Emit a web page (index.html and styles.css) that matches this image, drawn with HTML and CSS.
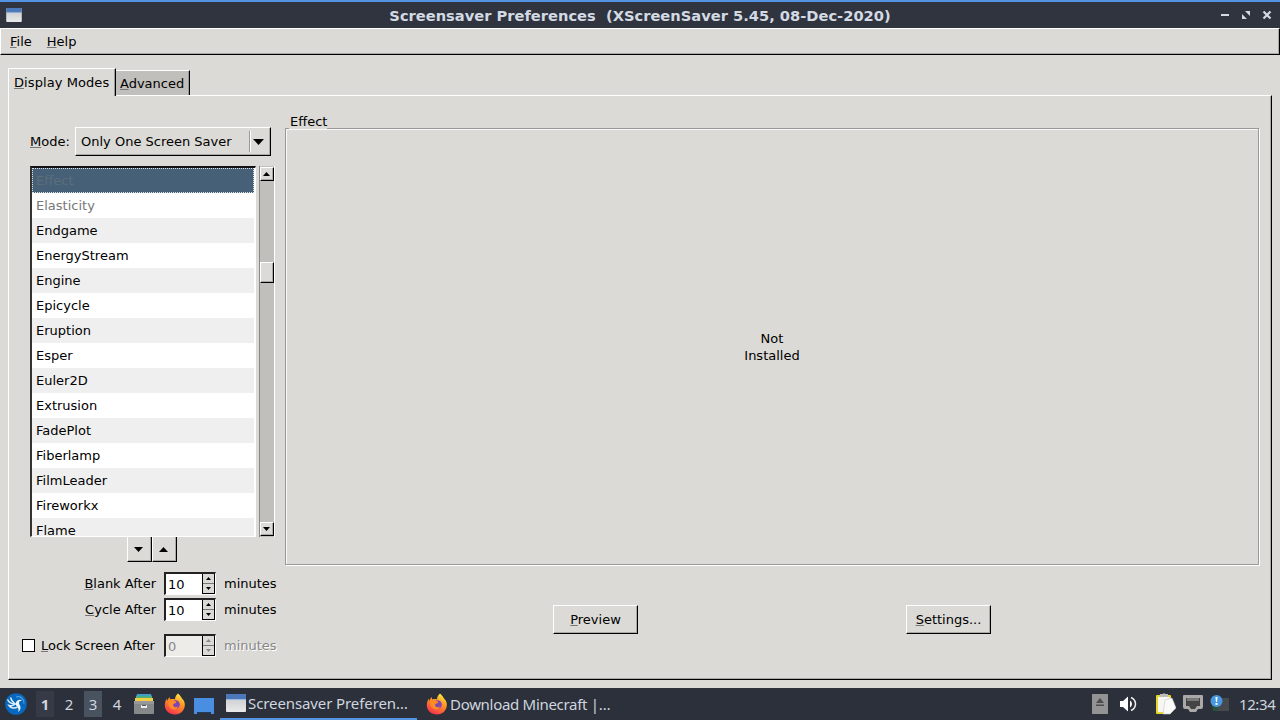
FILE: index.html
```html
<!DOCTYPE html>
<html lang="en">
<head>
<meta charset="utf-8">
<title>Screensaver Preferences</title>
<link rel="stylesheet" href="styles.css">
</head>
<body>
<svg width="0" height="0" class="defs" aria-hidden="true">
  <defs>
    <linearGradient id="winBody" x1="0" y1="0" x2="0" y2="1"><stop offset="0" stop-color="#c3c6cb"/><stop offset="1" stop-color="#e9e9e9"/></linearGradient>
    <linearGradient id="fox" x1=".8" y1="0" x2=".3" y2="1"><stop offset="0" stop-color="#fff04a"/><stop offset=".4" stop-color="#ff9a22"/><stop offset="1" stop-color="#f5304e"/></linearGradient>
    <symbol id="window" viewBox="0 0 20 18"><rect width="20" height="18" rx="1" fill="url(#winBody)"/><path d="M0 6V1q0-1 1-1h18q1 0 1 1v5z" fill="#4b78b8"/><path d="M0 5h20v1H0z" fill="#9db8df"/></symbol>
    <symbol id="firefox" viewBox="0 0 22 22">
      <path d="M14 .5c2 1.500 3 3.500 4 5 2.500 2 3.200 5 2.700 8-1 5-5 8-9.700 8C5 21.500.8 17.500.8 12c0-3 1-5 2.200-6.500V8l2.500-4 .8 2.500C8 5.800 9.500 6 11 6.500c0-2.500 1-4.500 3-6z" fill="url(#fox)"/>
      <circle cx="11.500" cy="11.500" r="4.300" fill="#8046b4"/>
      <path d="M4.500 8c2-1.500 4.500-1.500 6.500 0 1 .5 1.500 1 1 1.800L9.500 11c-.8.700-.5 2 .5 2.700 1.500 1 3 .3 4-.2-.8 2.500-3.500 3.500-6 2.500S3.500 11.500 4.500 8z" fill="#ff8a26"/>
    </symbol>
  </defs>
</svg>
<div class="screen">
  <header class="titlebar">
    <svg class="title-icon" width="16" height="14"><use href="#window"/></svg>
    <div class="title">Screensaver Preferences&nbsp; (XScreenSaver 5.45, 08-Dec-2020)</div>
    <svg class="title-controls" width="56" height="14" viewBox="0 0 56 14">
      <path d="M3 6h8v2H3z" fill="#d3dae3"/>
      <path d="M27 3h5v5zM24 6v5h5z" fill="#d3dae3"/>
      <path d="M45.500 3.500l7 7m0-7l-7 7" stroke="#d3dae3" stroke-width="2.200"/>
    </svg>
  </header>
  <nav class="menubar"><span><u>F</u>ile</span><span><u>H</u>elp</span></nav>
  <main class="window">
    <div class="tabs">
      <div class="tab active"><u>D</u>isplay Modes</div>
      <div class="tab"><u>A</u>dvanced</div>
    </div>
    <section class="page">
      <div class="left">
        <div class="mode">
          <label><u>M</u>ode:</label>
          <div class="combo raised"><span>Only One Screen Saver</span><i></i>
            <svg width="11" height="6"><path d="M0 0h11L5.500 6z"/></svg></div>
        </div>
        <div class="listbox">
          <ul class="list">
            <li class="selected">Effect</li><li class="dim">Elasticity</li><li>Endgame</li><li>EnergyStream</li><li>Engine</li><li>Epicycle</li><li>Eruption</li><li>Esper</li><li>Euler2D</li><li>Extrusion</li><li>FadePlot</li><li>Fiberlamp</li><li>FilmLeader</li><li>Fireworkx</li><li>Flame</li>
          </ul>
          <div class="scrollbar">
            <div class="stepper raised"><svg width="7" height="4"><path d="M0 4h7L3.500 0z"/></svg></div>
            <div class="trough"><div class="thumb raised"></div></div>
            <div class="stepper raised"><svg width="7" height="4"><path d="M0 0h7L3.500 4z"/></svg></div>
          </div>
        </div>
        <div class="order">
          <div class="raised"><svg width="9" height="5"><path d="M0 0h9L4.500 5z"/></svg></div>
          <div class="raised"><svg width="9" height="5"><path d="M0 5h9L4.500 0z"/></svg></div>
        </div>
        <div class="spinrow blank">
          <label><u>B</u>lank After</label>
          <div class="spin"><span>10</span><div class="arrows"><b><svg width="5" height="3"><path d="M0 3h5L2.500 0z"/></svg></b><b><svg width="5" height="3"><path d="M0 0h5L2.500 3z"/></svg></b></div></div>
          <span class="unit">minutes</span>
        </div>
        <div class="spinrow cycle">
          <label><u>C</u>ycle After</label>
          <div class="spin"><span>10</span><div class="arrows"><b><svg width="5" height="3"><path d="M0 3h5L2.500 0z"/></svg></b><b><svg width="5" height="3"><path d="M0 0h5L2.500 3z"/></svg></b></div></div>
          <span class="unit">minutes</span>
        </div>
        <div class="spinrow lock">
          <label><i class="check"></i><span><u>L</u>ock Screen After</span></label>
          <div class="spin off"><span>0</span><div class="arrows"><b><svg width="5" height="3"><path d="M0 3h5L2.500 0z"/></svg></b><b><svg width="5" height="3"><path d="M0 0h5L2.500 3z"/></svg></b></div></div>
          <span class="unit off">minutes</span>
        </div>
      </div>
      <div class="right">
        <div class="legend">Effect</div>
        <div class="frame"><p>Not<br>Installed</p></div>
        <div class="actions">
          <div class="button raised"><span><u>P</u>review</span></div>
          <div class="button raised"><span><u>S</u>ettings...</span></div>
        </div>
      </div>
    </section>
  </main>
  <footer class="taskbar">
    <svg class="start" width="22" height="22" viewBox="0 0 22 22"><circle cx="11" cy="11" r="10.800" fill="#0868bd"/><path d="M2.500 6.500c1.500 3 4 4.500 7.500 4.500M5.500 4.500C6 7 7.500 9 10 11c-2 2-4 2-6 1.500 2 3 6 3 8.500 1.500" fill="none" stroke="#d9ecfb" stroke-width="1.500"/><path d="M10 11c1-1 1.200-2.500 2.500-3.500 1.500-1 3.500-.8 4.500.3-2-.2-3 .7-3 2.200 0 2 2 3 1.500 5.500-.3 1.500-1.300 2.500-2.500 3.500.8-2 .7-3.500-.5-5z" fill="#eef7ff"/><path d="M11 4c4.500-1.200 8 1.800 8 6.500" fill="none" stroke="#4aa0e4" stroke-width="1.200"/></svg>
    <div class="desks"><span class="used bold">1</span><span>2</span><span class="current">3</span><span>4</span></div>
    <svg class="files" width="20" height="20" viewBox="0 0 20 20"><path d="M3 0h14l1 3H2z" fill="#3fa0c8"/><path d="M2 2h16v3H2z" fill="#4fae7b"/><path d="M1 4h18v4H1z" fill="#f2cf45"/><rect y="7" width="20" height="13" rx="1" fill="#858989"/><path d="M0 7h20v3H0z" fill="#969999"/><path d="M7 11h6v3H7z" fill="#eee"/><path d="M8 11h4v1H8z" fill="#555"/></svg>
    <svg class="ff" width="22" height="22"><use href="#firefox"/></svg>
    <svg class="desktop" width="20" height="17" viewBox="0 0 20 17"><path d="M0 0h20v16h-3v-2H3v2H0z" fill="#4a8ee2"/><path d="M3 14h14v1H3z" fill="#263a59"/></svg>
    <div class="task active"><svg width="20" height="18"><use href="#window"/></svg><span>Screensaver Preferen…</span></div>
    <div class="task second"><svg width="22" height="22"><use href="#firefox"/></svg><span>Download Minecraft |…</span></div>
    <div class="tray">
      <svg width="16" height="20" viewBox="0 0 16 20"><path d="M0 0h16v20H0z" fill="#939393"/><path d="M4 9h8L8 4zM4 10.500h8V12H4z" fill="#4d4d4d"/></svg>
      <svg class="volume" width="17" height="16" viewBox="0 0 17 16"><path d="M0 5h3l5-4.500v15L3 11H0z" fill="#fff"/><path d="M10 4.500v7q2-1 2-3.500t-2-3.500z" fill="#fff"/><path d="M11 1.500q4.500 2 4.500 6.500T11 14.500" fill="none" stroke="#eee" stroke-width="1.500"/></svg>
      <svg class="clip" width="20" height="22" viewBox="0 0 20 22"><rect x="0" y="2" width="15" height="19" rx="1" fill="#e6d72c"/><path d="M2 4h12v15H2z" fill="#f6f6f2"/><path d="M4 1h2.500q1.500-1.500 3 0H12v3H4z" fill="#bbb"/><path d="M9 7l7-2 4 10-6 6H7z" fill="#fafafa" stroke="#c9c9c5" stroke-width=".6"/></svg>
      <svg class="net" width="20" height="18" viewBox="0 0 20 18"><path d="M1 0h18q1 0 1 1v11q0 2-2 2h-3l-2 3H7l-2-3H2q-2 0-2-2V1q0-1 1-1z" fill="#aaa9a7"/><path d="M3 3h14v8h-3l-2 3H8l-2-3H3z" fill="#444"/><path d="M5 3v3m2-3v3m2-3v3m2-3v3m2-3v3m2-3v3" stroke="#bbb" stroke-width=".9"/></svg>
      <svg class="notify" width="20" height="18" viewBox="0 0 20 18"><path d="M3 3h16v13H3z" fill="#464a4d"/><path d="M2 10h6v6H3z" fill="#29523c"/><circle cx="6.500" cy="6" r="6" fill="#4898df"/><path d="M5.500 2h2l-.4 5h-1.200zM5.500 8h2v2h-2z" fill="#fff"/></svg>
      <time>12:34</time>
    </div>
  </footer>
</div>
</body>
</html>
```
FILE: styles.css
```css
* { box-sizing: border-box; }
body { margin: 0; font: 13px/17px "DejaVu Sans", sans-serif; color: #000; }
.defs { position: absolute; }
svg { display: block; flex: none; }
u { text-decoration: underline; text-decoration-color: #777; text-decoration-skip-ink: none; text-underline-offset: 1px; text-decoration-thickness: 1px; }
.screen { width: 1280px; height: 720px; overflow: hidden; display: flex; flex-direction: column; background: #dbdad6; }
.titlebar { height: 28px; flex: none; display: flex; align-items: center; background: #2f343f; border-top: 2px solid #5294e2; padding: 0 6px 0 6px; color: #d3dae3; }
.title { flex: 1; text-align: center; font-weight: bold; font-size: 14.667px; padding-left: 40px; white-space: nowrap; }
.menubar { height: 27px; flex: none; display: flex; gap: 15px; align-items: center; padding: 0 9px; border: 1px solid #fff; border-right-color: #000; border-bottom-color: #000; box-shadow: inset -1px -1px #aaa9a6; }
.window { flex: 1; padding: 13px 8px 8px; display: flex; flex-direction: column; }
.tabs { display: flex; height: 27px; align-items: flex-end; }
.tab { height: 25px; padding: 4px 4px 0 4px; width: 74px; background: #c0bfbc; border-top: 1px solid #fff; border-right: 1px solid #000; box-shadow: inset -1px 0 #999; white-space: nowrap; }
.tab.active { position: relative; width: 108px; height: 28px; margin-bottom: -1px; padding: 5px 0 0 5px; background: #dbdad6; border-left: 1px solid #fff; letter-spacing: .08px; }
.page { flex: 1; display: flex; border: 1px solid #fff; border-right-color: #000; border-bottom-color: #000; box-shadow: inset -1px -1px #aaa9a6; }
.left { width: 276px; flex: none; padding-top: 31px; }
.raised { background: #dbdad6; border: 1px solid #fff; border-right-color: #000; border-bottom-color: #000; box-shadow: inset -1px -1px #aaa9a6; display: flex; align-items: center; justify-content: center; }
.mode { display: flex; align-items: center; padding-left: 21px; height: 29px; }
.mode label { width: 45px; }
.combo { width: 196px; height: 29px; justify-content: flex-start; padding-left: 5px; white-space: nowrap; }
.combo span { width: 168px; }
.combo i { width: 2px; height: 21px; border-left: 1px solid #999; border-right: 1px solid #fff; margin-right: 2px; }
.listbox { display: flex; margin: 10px 0 0 21px; height: 371px; gap: 3px; }
.list { list-style: none; margin: 0; padding: 0; width: 226px; overflow: hidden; background: #fff; border: 1px solid #000; border-top: 2px solid #111; border-left: 2px solid #333; border-right: 1px solid #fff; border-bottom-color: #fff; }
.list li { height: 25px; padding: 4px 0 0 4px; margin-right: 1px; white-space: nowrap; }
.list li:nth-child(odd) { background: #efefef; }
.list li.selected { background: #466078; color: #5d6d78; outline: 1px dotted #dfe4e8; outline-offset: -1px; }
.list li.dim { color: #777; }
.scrollbar { width: 16px; display: flex; flex-direction: column; border-left: 1px solid #888; border-right: 1px solid #fff; background: #c0bfbc; padding: 1px 0; }
.stepper { height: 14px; flex: none; padding-right: 1px; }
.trough { flex: 1; padding-top: 81px; }
.thumb { height: 21px; }
.order { display: flex; padding-left: 118px; height: 25px; }
.order div { width: 25px; border-top: 0; padding-right: 2px; }
.spinrow { display: flex; align-items: center; height: 23px; }
.spinrow label { width: 147px; margin-right: 8px; text-align: right; }
.blank { margin-top: 10px; }
.cycle { margin-top: 3px; }
.lock { margin-top: 13px; }
.lock label { display: flex; align-items: center; padding-left: 13px; white-space: nowrap; }
.check { width: 13px; height: 13px; background: #fff; border: 1px solid #000; margin-right: 6px; }
.spin { width: 52px; height: 23px; display: flex; background: #fff; border: 1px solid #fff; border-top: 2px solid #222; border-left: 2px solid #222; }
.spin > span { width: 36px; padding: 2px 0 0 2px; }
.arrows { width: 13px; display: flex; flex-direction: column; border-left: 1px solid #000; border-right: 1px solid #000; border-bottom: 1px solid #000; background: #dbdad6; }
.arrows b { flex: 1; display: flex; align-items: center; justify-content: center; }
.arrows b + b { border-top: 1px solid #777; }
.unit { margin-left: 8px; }
.spin.off { background: #edece9; color: #888; }
.spin.off path { fill: #888; }
.unit.off { color: #888; text-shadow: 1px 1px #fff; }
.right { width: 974px; padding-top: 16px; display: flex; flex-direction: column; }
.legend { align-self: flex-start; position: relative; margin-left: 4px; padding-left: 1px; margin-bottom: -1px; height: 17px; line-height: 19px; background: #dbdad6; }
.frame { height: 437px; flex: none; border: 1px solid #999; box-shadow: inset 1px 1px #f8f8f7, 1px 1px #fff; display: flex; align-items: center; justify-content: center; text-align: center; }
.frame p { margin: 0; }
.actions { display: flex; margin-top: 40px; padding-left: 268px; gap: 268px; }
.button { width: 85px; height: 29px; }
.taskbar { height: 32px; flex: none; display: flex; align-items: center; background: #2b303b; color: #d0d5df; font: 15px/22px "Noto Sans", sans-serif; padding: 0 5px; }
.desks { display: flex; margin-left: 6px; height: 26px; line-height: 26px; text-align: center; }
.desks span { width: 24px; border: 0 solid #2b303b; border-left-width: 3px; border-right-width: 3px; }
.desks .used { background: #353a46; }
.desks .bold { font-weight: bold; }
.desks .current { background: #49525f; }
.files { margin-left: 5px; }
.ff { margin-left: 10px; }
.desktop { margin: 4px 0 0 8px; }
.task { display: flex; align-items: center; height: 32px; white-space: nowrap; letter-spacing: -.1px; }
.task.active { margin-left: 6px; width: 197px; padding-left: 6px; gap: 2px; border-bottom: 2px solid #5294e2; }
.task.second { margin-left: 9px; gap: 2px; letter-spacing: -.3px; }
.tray { margin-left: auto; display: flex; align-items: center; white-space: nowrap; }
.volume { margin-left: 12px; }
.clip { margin-left: 19px; }
.net { margin-left: 7px; }
.notify { margin-left: 7px; }
.tray time { width: 36px; margin-left: 9px; letter-spacing: -.4px; }
```
